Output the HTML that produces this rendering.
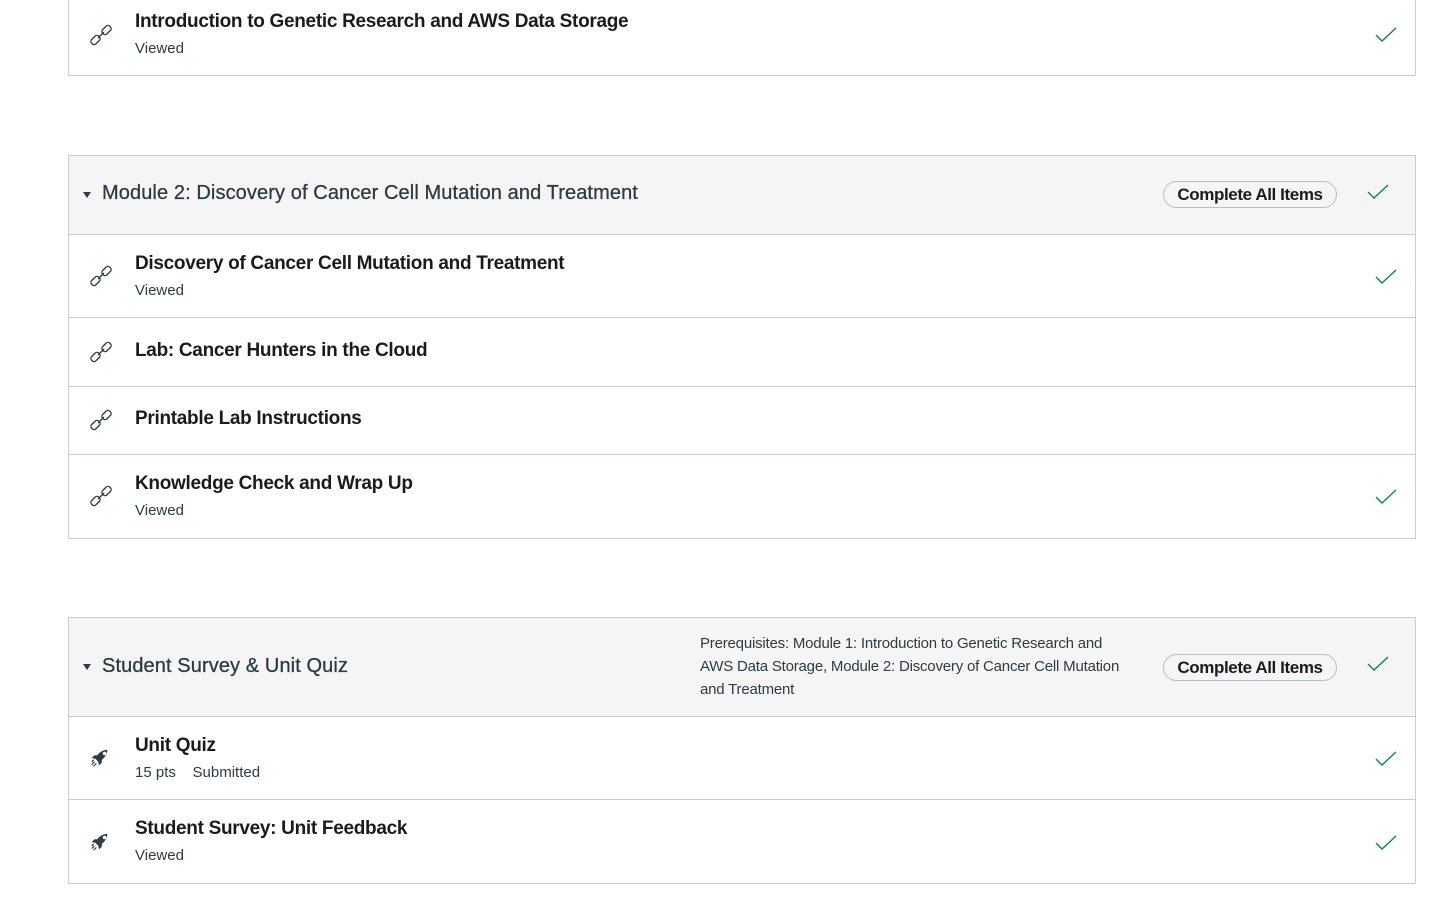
<!DOCTYPE html>
<html><head><meta charset="utf-8"><style>
body{margin:0;width:1447px;height:901px;background:#fff;font-family:"Liberation Sans",sans-serif;color:#2d3b45;position:relative;overflow:hidden}
.box{position:absolute;left:68px;width:1346px;border:1px solid #c7cdd1}
.hdr{background:#f5f5f5}
.row{position:absolute;left:0;right:0;border-top:1px solid #c7cdd1}
.t{position:absolute;left:66px;font-size:19px;font-weight:bold;color:#1b1b1b;white-space:nowrap;letter-spacing:-0.3px}
.s{position:absolute;left:66px;font-size:15px;color:#2d3b45;white-space:nowrap}
.ic{position:absolute;left:20px}
.ck{position:absolute;right:18px}
.btn{position:absolute;left:1094px;width:174px;height:27px;border:1px solid #b8bec2;border-radius:14px;background:#f5f5f5;font-size:17px;font-weight:bold;color:#1b1b1b;text-align:center;line-height:26px;box-sizing:border-box;letter-spacing:-0.4px}
.mt{position:absolute;left:33px;font-size:20px;color:#2d3b45;white-space:nowrap;letter-spacing:0.1px;-webkit-text-stroke:0.3px #2d3b45}
.tri{position:absolute;left:14px;width:0;height:0;border-left:4px solid transparent;border-right:4px solid transparent;border-top:6px solid #2d3b45}
</style></head><body>
<svg width="0" height="0" style="position:absolute"><defs>
<symbol id="lk" viewBox="0 0 24 24"><g fill="none" stroke="#2d3b45" stroke-width="1.3"><rect x="1.5" y="14" width="10" height="6" rx="2.5" transform="rotate(-45 6.5 17)"/><rect x="12.5" y="4" width="10" height="6" rx="2.5" transform="rotate(-45 17.5 7)"/><path d="M9 15l6-6"/></g></symbol>
<symbol id="rk" viewBox="0 0 24 24"><path fill="#2d3b45" d="M21 3c-5 0-9 2-12 6l-3 0-3 3 4 1 3 3 1 4 3-3 0-3c4-3 6-7 6-11zM15 7a2 2 0 1 1 0 .1z"/><path d="M3 19l3-3M5 21l3-3M3 16l2-2" stroke="#2d3b45" stroke-width="1.3"/></symbol>
<symbol id="ck" viewBox="0 0 22 16"><path d="M1 8l6 6L21 1" fill="none" stroke="#0b874b" stroke-width="1.4"/></symbol>
</defs></svg>

<div class="box" style="top:-1px;height:75px">
<svg class="ic" style="top:23px" width="24" height="24"><use href="#lk"/></svg>
<div class="t" style="top:11px">Introduction to Genetic Research and AWS Data Storage</div>
<div class="s" style="top:40px">Viewed</div>
<svg class="ck" style="top:27px" width="22" height="16"><use href="#ck"/></svg>
</div>

<div class="box" style="top:155px;height:382px">
<div class="hdr" style="position:absolute;left:0;right:0;top:0;height:78px"></div>
<div class="tri" style="top:36px"></div>
<div class="mt" style="top:26px">Module 2: Discovery of Cancer Cell Mutation and Treatment</div>
<div class="btn" style="top:25px">Complete All Items</div>
<svg class="ck" style="top:28px;right:26px" width="22" height="16"><use href="#ck"/></svg>
<div class="row" style="top:78px;height:83px">
<svg class="ic" style="top:29px" width="24" height="24"><use href="#lk"/></svg>
<div class="t" style="top:18px">Discovery of Cancer Cell Mutation and Treatment</div>
<div class="s" style="top:47px">Viewed</div>
<svg class="ck" style="top:34px" width="22" height="16"><use href="#ck"/></svg>
</div>
<div class="row" style="top:161px;height:68px">
<svg class="ic" style="top:22px" width="24" height="24"><use href="#lk"/></svg>
<div class="t" style="top:22px">Lab: Cancer Hunters in the Cloud</div>
</div>
<div class="row" style="top:230px;height:68px">
<svg class="ic" style="top:21px" width="24" height="24"><use href="#lk"/></svg>
<div class="t" style="top:21px">Printable Lab Instructions</div>
</div>
<div class="row" style="top:298px;height:83px">
<svg class="ic" style="top:29px" width="24" height="24"><use href="#lk"/></svg>
<div class="t" style="top:18px">Knowledge Check and Wrap Up</div>
<div class="s" style="top:47px">Viewed</div>
<svg class="ck" style="top:34px" width="22" height="16"><use href="#ck"/></svg>
</div>
</div>

<div class="box" style="top:617px;height:265px">
<div class="hdr" style="position:absolute;left:0;right:0;top:0;height:98px"></div>
<div class="tri" style="top:46px"></div>
<div class="mt" style="top:37px">Student Survey &amp; Unit Quiz</div>
<div style="position:absolute;left:631px;top:14px;width:440px;font-size:15px;line-height:23px;color:#2d3b45;letter-spacing:-0.2px">Prerequisites: Module 1: Introduction to Genetic Research and<br>AWS Data Storage, Module 2: Discovery of Cancer Cell Mutation<br>and Treatment</div>
<div class="btn" style="top:36px">Complete All Items</div>
<svg class="ck" style="top:38px;right:26px" width="22" height="16"><use href="#ck"/></svg>
<div class="row" style="top:98px;height:83px">
<svg class="ic" style="top:30px" width="22" height="22"><use href="#rk"/></svg>
<div class="t" style="top:18px">Unit Quiz</div>
<div class="s" style="top:47px">15 pts &nbsp;&nbsp; Submitted</div>
<svg class="ck" style="top:34px" width="22" height="16"><use href="#ck"/></svg>
</div>
<div class="row" style="top:181px;height:83px">
<svg class="ic" style="top:31px" width="22" height="22"><use href="#rk"/></svg>
<div class="t" style="top:18px">Student Survey: Unit Feedback</div>
<div class="s" style="top:47px">Viewed</div>
<svg class="ck" style="top:35px" width="22" height="16"><use href="#ck"/></svg>
</div>
</div>
</body></html>
